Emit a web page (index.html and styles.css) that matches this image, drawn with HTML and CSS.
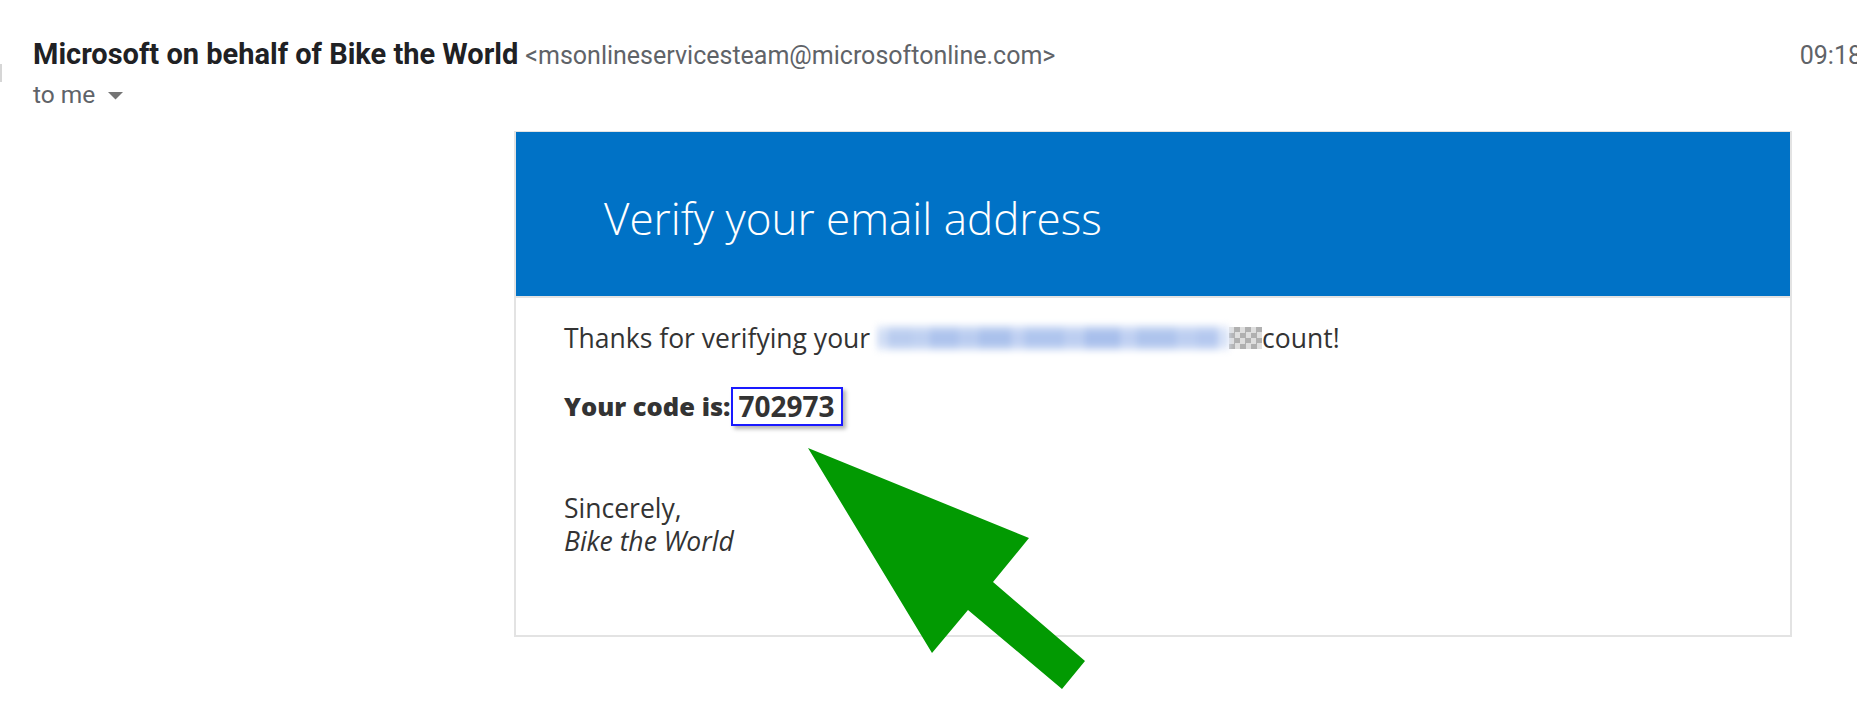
FILE: index.html
```html
<!DOCTYPE html>
<html lang="en">
<head>
<meta charset="utf-8">
<title>Verify your email address</title>
<link rel="stylesheet" href="styles.css">
</head>
<body>
<div class="page">
  <div class="edge-mark"></div>
  <div class="meta">
    <div class="meta-row">
      <span class="sender">Microsoft on behalf of Bike the World</span>
      <span class="email">&lt;msonlineservicesteam@microsoftonline.com&gt;</span>
      <span class="time">09:18</span>
    </div>
    <div class="to-row">
      <span>to me</span>
      <svg class="caret" width="15" height="8" viewBox="0 0 15 8"><polygon points="0,0 15,0 7.5,7.5" fill="#757575"/></svg>
    </div>
  </div>
  <div class="card">
    <div class="card-head">
      <h1 class="title">Verify your email address</h1>
    </div>
    <div class="card-body">
      <p class="line">Thanks for verifying your <span class="redact-email"></span> <span class="redact-gray"></span>count!</p>
      <p class="line code-line"><strong>Your code is:</strong> <span class="code">702973</span></p>
      <p class="sign">Sincerely,<br><em>Bike the World</em></p>
    </div>
  </div>
</div>
<svg class="pointer" width="1857" height="713" viewBox="0 0 1857 713">
  <polygon points="808,448 1029,538 993,582 1085,661 1062,689 968,610 932,653" fill="#029a02"/>
</svg>
</body>
</html>
```
FILE: styles.css
```css
html, body {
  margin: 0;
  padding: 0;
  background: #ffffff;
  overflow: hidden;
}
body {
  width: 1857px;
  height: 713px;
  position: relative;
  font-family: Roboto, "Liberation Sans", sans-serif;
}
.page {
  padding: 37px 0 0 33px;
}
.edge-mark {
  position: absolute;
  left: 0;
  top: 64px;
  width: 2px;
  height: 18px;
  background: #d6d6d6;
}
.meta-row {
  display: flex;
  align-items: baseline;
  height: 34px;
  line-height: 34px;
  white-space: nowrap;
}
.sender {
  font-weight: 700;
  font-size: 29px;
  color: #202124;
}
.email {
  margin-left: 7px;
  font-size: 25px;
  color: #5f6368;
}
.time {
  margin-left: auto;
  margin-right: -5px;
  font-size: 25px;
  color: #5f6368;
}
.to-row {
  margin-top: 7px;
  height: 34px;
  line-height: 34px;
  font-size: 24.5px;
  color: #5f6368;
  display: flex;
  align-items: center;
}
.caret {
  margin-left: 13px;
  margin-top: 2px;
}
.card {
  margin: 19px 0 0 481px;
  width: 1278px;
  height: 506px;
  box-sizing: border-box;
  border: 2px solid #e3e3e3;
  border-top-width: 1px;
}
.card-head {
  height: 164px;
  background: #0072c6;
  border-bottom: 2px solid #e3e3e3;
  display: flex;
  align-items: center;
  padding-left: 88px;
}
.title {
  margin: 8px 0 0 0;
  font-family: "Open Sans", "Noto Sans", sans-serif;
  font-weight: 300;
  font-size: 44px;
  color: #ffffff;
  line-height: 1;
}
.card-body {
  padding: 24px 0 0 48px;
  font-family: "Open Sans", "Noto Sans", sans-serif;
  font-size: 26.5px;
  color: #333333;
}
.line {
  margin: 0;
  line-height: 32px;
  height: 32px;
  display: flex;
  align-items: center;
  white-space: pre;
}
.code-line {
  margin-top: 36px;
  font-weight: 700;
  font-size: 25.5px;
}
.sign {
  margin: 70px 0 0 0;
  line-height: 33px;
}
.redact-email {
  display: inline-block;
  width: 352px;
  height: 26px;
  background:
    linear-gradient(180deg, rgba(255,255,255,0.45) 0 10%, rgba(255,255,255,0) 30% 72%, rgba(255,255,255,0.5) 92%),
    linear-gradient(90deg, #d0ddf5 0 3%, #b9ccef 3% 10%, #bed0f1 10% 15%, #adc3ed 15% 23%, #b9ccf0 23% 29%, #aac1ec 29% 38%, #bfd0f2 38% 42%, #afc5ee 42% 53%, #bccef1 53% 59%, #a8bfec 59% 69%, #bfd0f2 69% 74%, #aec4ed 74% 85%, #bccef1 85% 91%, #b4c8ef 91% 97%, #d7e2f7 97%);
  filter: blur(3px);
}
.redact-gray {
  display: inline-block;
  width: 33px;
  height: 22px;
  background: repeating-conic-gradient(#b0b0b0 0 25%, #dedede 0 50%) 0 0 / 11px 11px;
}
.code {
  display: inline-block;
  border: 2px solid #1a1aff;
  padding: 0 6px;
  line-height: 35px;
  height: 35px;
  font-size: 28px;
  box-shadow: 3px 3px 4px rgba(0,0,0,0.3);
  background: #ffffff;
}
.pointer {
  position: absolute;
  left: 0;
  top: 0;
  pointer-events: none;
}
```
